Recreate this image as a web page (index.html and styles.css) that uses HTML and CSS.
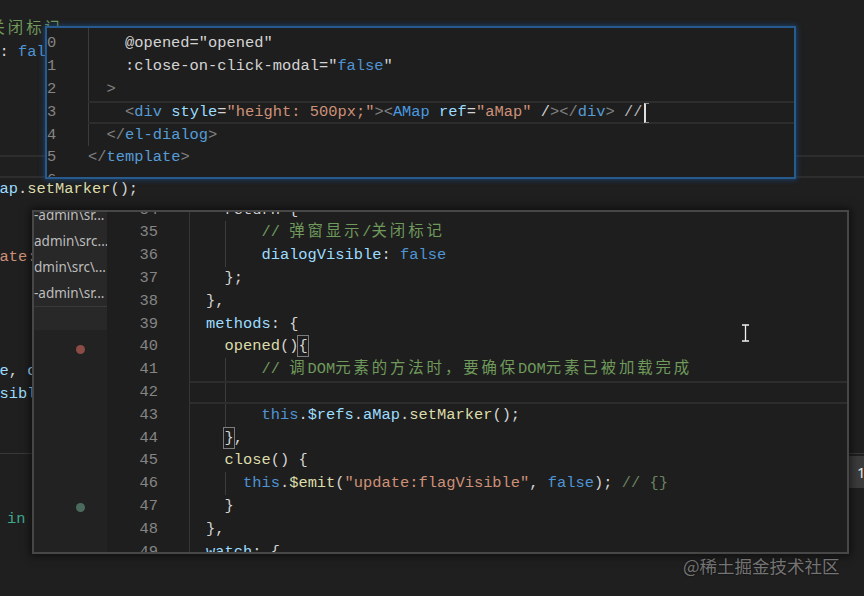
FILE: index.html
```html
<!DOCTYPE html>
<html lang="zh">
<head>
<meta charset="utf-8">
<title>editor</title>
<link rel="stylesheet" href="styles.css">
</head>
<body>
<div class="screen">
  <div class="bg-editor">
    <div class="bg-code">
      <div class="row">      <span class="c">// <span class="cjk">弹窗显示</span>/<span class="cjk">关闭标记</span></span></div>
      <div class="row">      <span class="a">dialogVisible</span>: <span class="k">false</span></div>
      <div class="row">  };</div>
      <div class="row">},</div>
      <div class="row"><span class="a">methods</span>: {</div>
      <div class="row">  <span class="f">opened</span>(){</div>
      <div class="row cur"></div>
      <div class="row">      <span class="k">this</span>.<span class="a">$refs</span>.<span class="a">aMap</span>.<span class="f">setMarker</span>();</div>
      <div class="row">  },</div>
      <div class="row">  <span class="f">close</span>() {</div>
      <div class="row">    <span class="k">this</span>.<span class="f">$emit</span>(<span class="s">"update:flagVisible"</span>, <span class="k">false</span>);</div>
      <div class="row">  }</div>
      <div class="row">},</div>
      <div class="row"><span class="a">watch</span>: {</div>
      <div class="row">  <span class="a">flagVisible</span>: {</div>
      <div class="row">   <span class="f">flagVisible</span>(<span class="a">value</span>, <span class="a">oldValue</span>) {</div>
      <div class="row">      <span class="k">this</span>.<span class="a">dialogVisible</span> = <span class="a">value</span>;</div>
    </div>
  </div>
  <div class="terminal">
    <div class="term-head"><div class="badge">1</div></div>
    <div class="row term-in"><span class="tg">in</span></div>
    <div class="row term-year"><span class="tb">  2022</span></div>
  </div>

  <div class="peek">
    <div class="peek-body">
      <div class="peek-gut">
        <div class="row">9</div>
        <div class="row">0</div>
        <div class="row">1</div>
        <div class="row">2</div>
        <div class="row">3</div>
        <div class="row">4</div>
        <div class="row">5</div>
        <div class="row">6</div>
      </div>
      <div class="peek-code">
        <div class="row g0">    @close="close"</div>
        <div class="row g0">    @opened="opened"</div>
        <div class="row g0">    :close-on-click-modal="<span class="k">false</span>"</div>
        <div class="row g0">  <span class="p">&gt;</span></div>
        <div class="row g0 cur">    <span class="p">&lt;</span><span class="t">div</span> <span class="a">style</span>=<span class="s">"height: 500px;"</span><span class="p">&gt;&lt;</span><span class="t2">AMap</span> <span class="a">ref</span>=<span class="s">"aMap"</span> /<span class="p">&gt;&lt;/</span><span class="t">div</span><span class="p">&gt;</span> <span class="dim">//</span><span class="caret"></span></div>
        <div class="row g0">  <span class="p">&lt;/</span><span class="t">el-dialog</span><span class="p">&gt;</span></div>
        <div class="row"><span class="p">&lt;/</span><span class="t">template</span><span class="p">&gt;</span></div>
        <div class="row"></div>
      </div>
    </div>
  </div>

  <div class="popup">
    <div class="side">
      <div class="files">
        <div class="file">-admin\sr...</div>
        <div class="file">admin\src...</div>
        <div class="file">dmin\src\...</div>
        <div class="file">-admin\sr...</div>
        <div class="file-rest"></div>
      </div>
      <span class="dot dot-red"></span>
      <span class="dot dot-green"></span>
    </div>
    <div class="gut2">
      <div class="rows">
        <div class="row">34</div>
        <div class="row">35</div>
        <div class="row">36</div>
        <div class="row">37</div>
        <div class="row">38</div>
        <div class="row">39</div>
        <div class="row">40</div>
        <div class="row">41</div>
        <div class="row">42</div>
        <div class="row">43</div>
        <div class="row">44</div>
        <div class="row">45</div>
        <div class="row">46</div>
        <div class="row">47</div>
        <div class="row">48</div>
        <div class="row">49</div>
      </div>
    </div>
    <div class="code2">
      <div class="rows">
        <div class="row">  return {</div>
        <div class="row g2">      <span class="c">// <span class="cjk">弹窗显示</span>/<span class="cjk">关闭标记</span></span></div>
        <div class="row g2">      <span class="a">dialogVisible</span>: <span class="k">false</span></div>
        <div class="row">  };</div>
        <div class="row">},</div>
        <div class="row"><span class="a">methods</span>: {</div>
        <div class="row">  <span class="f">opened</span>()<span class="bm">{</span></div>
        <div class="row g2">      <span class="c">// <span class="cjk">调</span>DOM<span class="cjk">元素的方法时，要确保</span>DOM<span class="cjk">元素已被加载完成</span></span></div>
        <div class="row g2 cur"></div>
        <div class="row g2">      <span class="k">this</span>.<span class="a">$refs</span>.<span class="a">aMap</span>.<span class="f">setMarker</span>();</div>
        <div class="row">  <span class="bm">}</span>,</div>
        <div class="row">  <span class="f">close</span>() {</div>
        <div class="row g2">    <span class="k">this</span>.<span class="f">$emit</span>(<span class="s">"update:flagVisible"</span>, <span class="k">false</span>); <span class="c2">// {}</span></div>
        <div class="row">  }</div>
        <div class="row">},</div>
        <div class="row"><span class="a">watch</span>: {</div>
      </div>
    </div>
  </div>

  <svg class="ibeam" width="9" height="18" viewBox="0 0 9 18"><path d="M1 1h7M4.5 1v16M1 17h7" stroke="#f0f0f0" stroke-width="1.3" fill="none"/></svg>
  <div class="watermark">@稀土掘金技术社区</div>
</div>
</body>
</html>
```
FILE: styles.css
```css
* { box-sizing: border-box; }
html, body { margin: 0; padding: 0; background: #1f1f1f; }
body { width: 864px; height: 596px; overflow: hidden; }

.screen {
  position: relative;
  width: 864px;
  height: 596px;
  overflow: hidden;
  background: #1f1f1f;
  font-family: "Liberation Mono", "Noto Sans CJK SC", monospace;
  font-size: 15.4px;
  color: #d4d4d4;
}

.row { height: 22.8px; line-height: 22.8px; white-space: pre; }
.row.cur { border-top: 2px solid #2d2d2d; border-bottom: 2px solid #2d2d2d; line-height: 18.8px; }
.cjk { letter-spacing: 2.9px; }

/* token colours */
.c { color: #6f9a5c; }
.c2 { color: #6a8560; }
.a { color: #9cdcfe; }
.k { color: #4e94d4; }
.t { color: #569cd6; }
.t2 { color: #4a9ae0; }
.s { color: #ce9178; }
.f { color: #dcdcaa; }
.p { color: #808080; }
.dim { color: #b8b8b8; }

/* background editor */
.bg-editor { height: 453px; padding-top: 18px; overflow: hidden; }
.bg-code { margin-left: -176px; }

.terminal { border-top: 1px solid #383838; height: 143px; }
.term-head { height: 36px; display: flex; justify-content: flex-end; padding-top: 2px; }
.badge {
  width: 16px; height: 32px; background: #3b3b3b; color: #e6e6e6;
  font-family: "Noto Sans", sans-serif; font-size: 15px; line-height: 32px;
  padding-left: 9px; overflow: hidden;
}
.term-in { margin-top: 18px; padding-left: 7px; }
.tg { color: #3fa98b; }
.term-year { margin-top: 60px; }
.tb { color: #3b8eea; }

/* peek panel (top) */
.peek {
  position: absolute; left: 45px; top: 26px; width: 751px; height: 153px;
  border: 2px solid #275b8d;
  box-shadow: 0 0 5px 1px rgba(25, 85, 150, 0.6);
  background: #1e1e1e;
  overflow: hidden;
}
.peek-body { display: flex; margin-top: -18.4px; }
.peek-gut { width: 41px; flex: none; color: #858585; }
.peek-code { flex: 1; }
.g0 {
  background-image: linear-gradient(#3c3c3c, #3c3c3c);
  background-repeat: no-repeat;
  background-size: 1px 100%;
  background-position: 0 0;
}
.caret {
  display: inline-block; width: 5px; height: 20px; vertical-align: top;
  border-left: 2px solid #dedede; border-top: 1px solid #8a8a8a; border-bottom: 1px solid #8a8a8a;
  margin-left: 2px; margin-top: 0;
}

/* popup panel (bottom) */
.popup {
  position: absolute; left: 32px; top: 210px; width: 817px; height: 344px;
  border: 2px solid #474747;
  box-shadow: 0 0 8px 2px rgba(0, 0, 0, 0.55);
  background: #1e1e1e;
  display: flex;
  overflow: hidden;
}
.side { width: 73px; flex: none; background: #222222; display: flex; flex-direction: column; }
.files { background: #282828; }
.file {
  height: 26px; line-height: 26px; white-space: nowrap; overflow: hidden;
  font-family: "Noto Sans", sans-serif; font-size: 13.5px; color: #bdbdbd;
}
.file:first-child { margin-top: -10px; }
.file-rest { height: 24px; border-top: 1px solid #3a3a3a; }
.dot { display: block; width: 9px; height: 9px; border-radius: 50%; margin-left: 41.5px; }
.dot-red { background: #8c4b45; margin-top: 14.5px; }
.dot-green { background: #4b6b5f; margin-top: 149px; }

.gut2 { width: 83px; flex: none; border-right: 1px solid #363636; padding-right: 31px; text-align: right; color: #858585; }
.rows { margin-top: -13.4px; }
.code2 { flex: 1; }
.code2 .row { padding-left: 16px; }
.g2 {
  background-image: linear-gradient(#3c3c3c, #3c3c3c);
  background-repeat: no-repeat;
  background-size: 1px 100%;
  background-position: 35px 0;
}
.bm {
  display: inline-block; line-height: 20px; height: 22px; vertical-align: top;
  border: 1px solid #7c7c7c; margin: 0 -1px;
}

.ibeam { position: absolute; left: 741px; top: 324px; }
.watermark {
  position: absolute; left: 683px; top: 553px;
  font-family: "Noto Sans CJK SC", sans-serif; font-size: 17.5px; line-height: 26px;
  color: rgba(215, 215, 215, 0.5);
  text-shadow: 0 0 2px rgba(0, 0, 0, 0.7);
}
```
